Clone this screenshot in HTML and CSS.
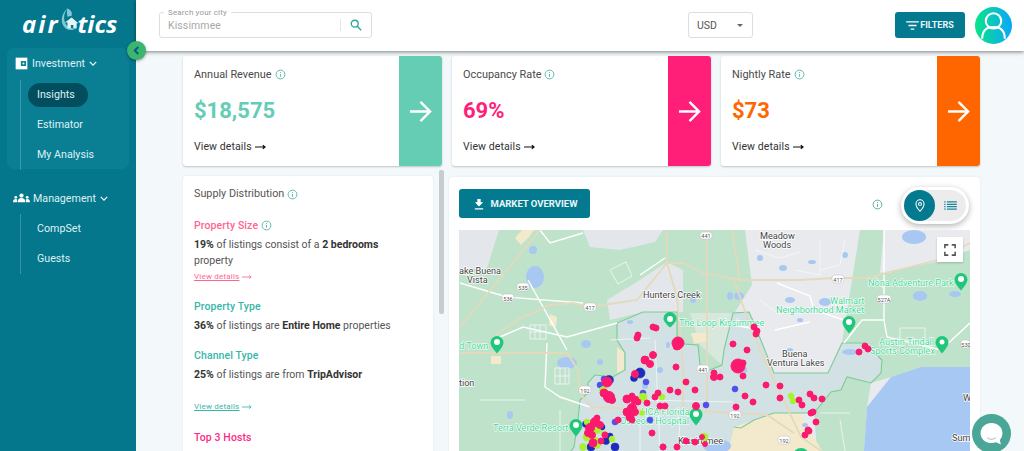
FILE: index.html
```html
<!DOCTYPE html>
<html lang="en">
<head>
<meta charset="utf-8">
<title>Airbtics Insights</title>
<link rel="stylesheet" href="styles.css">
</head>
<body>
<div class="app">
  <aside class="sidebar">
    <div class="logo">
      <span class="logo-text air">air</span>
      <svg class="logo-mark" viewBox="0 0 24 28"><path class="mark-swoosh" d="M9 0c-4 5-5 12-3 17 2 5 8 8 14 7-6 4-13 2-16-3C0 14 3 5 9 0z"/><path class="mark-swoosh" d="M9 0c4 2 6 5 5 9l-5 1c-1-3-1-7 0-10z"/><path class="mark-house" d="M14 11l8 7h-2v6h-4v-4h-3v4H9v-7H6z"/></svg>
      <span class="logo-text">tics</span>
    </div>
    <nav class="nav-group nav-panel">
      <div class="nav-head">
        <svg class="nav-icon" viewBox="0 0 20 20"><path d="M1 1h18v18H1z"/><rect class="wallet-hole" x="9" y="6" width="8" height="8" rx="1"/><circle cx="13" cy="10" r="1.600"/></svg>
        <span>Investment</span>
        <svg class="chev" viewBox="0 0 10 6"><path d="M1 1l4 4 4-4"/></svg>
      </div>
      <ul class="nav-list">
        <li class="nav-item active"><span>Insights</span></li>
        <li class="nav-item"><span>Estimator</span></li>
        <li class="nav-item"><span>My Analysis</span></li>
      </ul>
    </nav>
    <nav class="nav-group">
      <div class="nav-head">
        <svg class="nav-icon wide" viewBox="0 0 24 14"><circle cx="12" cy="3.500" r="3"/><path d="M6.500 13c0-4 2-6 5.500-6s5.500 2 5.500 6z"/><circle cx="4" cy="6" r="2"/><path d="M0 13c0-3 1.500-4.500 4-4.500S6 10 5.500 13z"/><circle cx="20" cy="6" r="2"/><path d="M24 13c0-3-1.500-4.500-4-4.500S18 10 18.500 13z"/></svg>
        <span>Management</span>
        <svg class="chev" viewBox="0 0 10 6"><path d="M1 1l4 4 4-4"/></svg>
      </div>
      <ul class="nav-list">
        <li class="nav-item"><span>CompSet</span></li>
        <li class="nav-item"><span>Guests</span></li>
      </ul>
    </nav>
    <button class="collapse" aria-label="Collapse"><svg viewBox="0 0 8 10"><path d="M6 1L2 5l4 4"/></svg></button>
  </aside>

  <div class="content">
    <header class="topbar">
      <div class="search">
        <span class="legend">Search your city</span>
        <span class="search-value">Kissimmee</span>
        <span class="search-btn"><svg viewBox="0 0 14 14"><circle cx="5.500" cy="5.500" r="4"/><path d="M8.500 8.500l4.500 4.500"/></svg></span>
      </div>
      <div class="currency"><span>USD</span><i class="caret"></i></div>
      <button class="filters"><svg viewBox="0 0 14 10"><path d="M0 1h14M2.500 5h9M5 9h4"/></svg>FILTERS</button>
      <div class="avatar"><svg viewBox="0 0 36 36"><circle cx="18" cy="13.500" r="7.500"/><path d="M7 31c0-8 4-11.500 11-11.500S29 23 29 31"/></svg></div>
    </header>

    <main class="main">
      <section class="kpis">
        <article class="kpi">
          <div class="kpi-body">
            <div class="kpi-title">Annual Revenue <svg class="info" viewBox="0 0 12 12"><circle cx="6" cy="6" r="4.800"/><path d="M6 5.500v3M6 3.300v1"/></svg></div>
            <div class="kpi-value c-mint">$18,575</div>
            <div class="kpi-link">View details <svg class="long-arrow" viewBox="0 0 12 6"><path d="M0 3h10M8.500 1l2.500 2-2.500 2"/></svg></div>
          </div>
          <div class="kpi-tile bg-mint"><svg viewBox="0 0 24 24"><path d="M1 12h21M12 2l10 10-10 10"/></svg></div>
        </article>
        <article class="kpi">
          <div class="kpi-body">
            <div class="kpi-title">Occupancy Rate <svg class="info" viewBox="0 0 12 12"><circle cx="6" cy="6" r="4.800"/><path d="M6 5.500v3M6 3.300v1"/></svg></div>
            <div class="kpi-value c-pink">69%</div>
            <div class="kpi-link">View details <svg class="long-arrow" viewBox="0 0 12 6"><path d="M0 3h10M8.500 1l2.500 2-2.500 2"/></svg></div>
          </div>
          <div class="kpi-tile bg-pink"><svg viewBox="0 0 24 24"><path d="M1 12h21M12 2l10 10-10 10"/></svg></div>
        </article>
        <article class="kpi">
          <div class="kpi-body">
            <div class="kpi-title">Nightly Rate <svg class="info" viewBox="0 0 12 12"><circle cx="6" cy="6" r="4.800"/><path d="M6 5.500v3M6 3.300v1"/></svg></div>
            <div class="kpi-value c-orange">$73</div>
            <div class="kpi-link">View details <svg class="long-arrow" viewBox="0 0 12 6"><path d="M0 3h10M8.500 1l2.500 2-2.500 2"/></svg></div>
          </div>
          <div class="kpi-tile bg-orange"><svg viewBox="0 0 24 24"><path d="M1 12h21M12 2l10 10-10 10"/></svg></div>
        </article>
      </section>

      <section class="lower">
        <div class="supply-wrap">
          <div class="supply">
            <div class="supply-title">Supply Distribution <svg class="info" viewBox="0 0 12 12"><circle cx="6" cy="6" r="4.800"/><path d="M6 5.500v3M6 3.300v1"/></svg></div>
            <h4 class="s-head c-rose first">Property Size <svg class="info" viewBox="0 0 12 12"><circle cx="6" cy="6" r="4.800"/><path d="M6 5.500v3M6 3.300v1"/></svg></h4>
            <p class="s-text"><b>19%</b> of listings consist of a <b>2 bedrooms</b> property</p>
            <div class="s-link-row near"><a class="s-link c-rose">View details</a><svg class="s-arrow c-rose" viewBox="0 0 12 6"><path d="M0 3h10M8.500 1l2.500 2-2.500 2"/></svg></div>
            <h4 class="s-head c-teal gap-a">Property Type</h4>
            <p class="s-text"><b>36%</b> of listings are <b>Entire Home</b> properties</p>
            <h4 class="s-head c-teal gap-b">Channel Type</h4>
            <p class="s-text"><b>25%</b> of listings are from <b>TripAdvisor</b></p>
            <div class="s-link-row far"><a class="s-link c-teal">View details</a><svg class="s-arrow c-teal" viewBox="0 0 12 6"><path d="M0 3h10M8.500 1l2.500 2-2.500 2"/></svg></div>
            <h4 class="s-head c-pink gap-c">Top 3 Hosts</h4>
          </div>
          <div class="scrollbar"></div>
        </div>

        <div class="market">
          <div class="market-bar">
            <button class="overview"><svg viewBox="0 0 12 14"><path d="M4 1h4v4h3L6 10 1 5h3zM1 12h10v1.500H1z"/></svg>MARKET OVERVIEW</button>
            <svg class="info info-market" viewBox="0 0 12 12"><circle cx="6" cy="6" r="4.800"/><path d="M6 5.500v3M6 3.300v1"/></svg>
            <div class="view-toggle">
              <span class="vt-on"><svg viewBox="0 0 12 16"><path d="M6 1a5 5 0 0 0-5 5c0 3.500 5 9 5 9s5-5.500 5-9a5 5 0 0 0-5-5z"/><circle cx="6" cy="6" r="1.800"/></svg></span>
              <span class="vt-off"><svg viewBox="0 0 14 10"><path d="M3 1h11M3 3.700h11M3 6.300h11M3 9h11M0 1h1.500M0 3.700h1.500M0 6.300h1.500M0 9h1.500"/></svg></span>
            </div>
          </div>
          <div class="map">
            <svg class="map-art" viewBox="459 230 511 221" preserveAspectRatio="xMinYMin slice">
              <rect class="m-base" x="459" y="230" width="511" height="221"/>
              <path class="m-green" d="M459 230H745L752 285L735 312L733 451H459Z"/>
              <path class="m-green" d="M860 230L884 230L880 273L935 262L970 250V367H921L891 377L871 383L867 407L864 451H817L814 413L831 392L841 390L847 377L881 373L882 360L864 343L842 343Z"/>
              <path class="m-grey" d="M583 230H663L655 242L620 250L590 247ZM459 230H499L487 268L459 270ZM607 300L640 280L667 262L683 270V312H643L610 320Z"/>
              <path class="m-pale" d="M749 312H734L733 380L754 323ZM700 345L722 365L733 313H690Z"/>
              <path class="m-zone" d="M677 312L643 312L617 323L617 340L625 353L625 370L613 377L595 375L588 383L588 393L580 400L578 420L574 447L571 451H728L734 427L741 428L754 420L774 413L814 413L831 392L841 390L847 377L871 383L881 373L882 360L864 343L842 343L828 373L774 373L754 323L749 312L733 313L724 350L722 365L710 370L700 365L698 345L684 344L677 337Z"/>
              <path class="m-cream" d="M734 427L754 420L774 413L800 413L822 451H728Z"/>
              <path class="m-cream" d="M491 356h10v8h-10zM550 314l7 3-1 10-7-2zM515 238l7-8h12l-5 7-8 8zM617 347l7 5v18l-7 3zM691 333h15l3 8-15 3z"/>
              <path class="m-zone-line" d="M677 337V312L643 312L617 323L617 340L625 353L625 370L613 377L595 375L588 383L588 393L580 400L578 420L574 447L571 451M677 337L684 344L698 345L700 365L710 370L722 365L724 350L733 313L749 312L754 323L774 373L828 373L842 343L864 343L882 360L881 373L871 383L847 377L841 390L831 392L814 413L774 413L754 420L741 428L734 427"/>
              <g class="m-water"><ellipse cx="535" cy="277" rx="9" ry="11"/><ellipse cx="567" cy="363" rx="10" ry="6"/><ellipse cx="533" cy="250" rx="4" ry="4"/><ellipse cx="586" cy="344" rx="5" ry="4"/><ellipse cx="914" cy="237" rx="12" ry="7"/><ellipse cx="645" cy="386" rx="3" ry="3"/><ellipse cx="717" cy="446" rx="14" ry="7"/><ellipse cx="739" cy="296" rx="5" ry="4"/><ellipse cx="790" cy="300" rx="5" ry="3"/><ellipse cx="825" cy="302" rx="6" ry="4"/><ellipse cx="800" cy="320" rx="3" ry="2"/><ellipse cx="783" cy="268" rx="4" ry="3"/><ellipse cx="760" cy="258" rx="3" ry="3"/><ellipse cx="812" cy="262" rx="4" ry="2"/><ellipse cx="845" cy="255" rx="3" ry="3"/><ellipse cx="920" cy="296" rx="7" ry="5"/><ellipse cx="955" cy="294" rx="6" ry="3"/><ellipse cx="510" cy="415" rx="3" ry="4"/><ellipse cx="600" cy="362" rx="3" ry="3"/><ellipse cx="660" cy="370" rx="3" ry="3"/><ellipse cx="668" cy="345" rx="2" ry="3"/><ellipse cx="630" cy="322" rx="3" ry="2"/><ellipse cx="693" cy="300" rx="3" ry="3"/><ellipse cx="730" cy="296" rx="3" ry="4"/><ellipse cx="850" cy="352" rx="8" ry="3"/><ellipse cx="805" cy="425" rx="3" ry="2"/><ellipse cx="790" cy="350" rx="3" ry="2"/><ellipse cx="745" cy="370" rx="2" ry="3"/></g>
              <path class="m-lake" d="M864 451l3-44 24-30 30-10h49v84z"/>
              <path class="m-road" d="M528 280L567 350M460 283L507 297L583 303M493 340L523 327L567 337L617 323M547 343L545 387L560 397L590 407M540 230L550 243L583 233M884 230L884 320L887 337L941 350L970 323M884 320L862 320L844 343M777 283L810 296L814 310L850 322M775 330L810 322M734 325L760 330M640 275L665 258"/>
              <path class="m-road thin" d="M640 400L733 402M655 340L660 450M610 340L650 338M680 420L678 451M640 425L640 451M560 410L560 451M480 400H525M875 275L884 290M820 240V275M760 300L780 315M840 420L845 451M820 413H850M530 325h16v14h-16zM535 325v14M540 325v14M530 332h16M555 368h14v16h-14zM560 368v16M565 368v16M555 376h14M610 270l16-8 6 14-14 8zM755 250l25 8 20-6M795 270l25 5M845 240l-5 25-20 5M900 340h25v-12h-25z"/>
              <path class="m-hwy" d="M460 327L540 230M493 337L517 320L550 305L573 303L590 307L637 300L667 263H683L703 273L740 280H800L834 278L867 278L937 260L970 243M667 230V263L677 297L683 367V413M707 230V413M732 230L740 280M734 280L754 337L774 380L801 437L821 451M590 407L740 413L767 415L794 433M460 353H567L578 370L580 393L593 410"/>
              <g class="m-shield"><rect x="517" y="283" width="12" height="8" rx="3"/><rect x="502" y="294" width="12" height="8" rx="3"/><rect x="584" y="303" width="12" height="8" rx="3"/><rect x="579" y="386" width="12" height="8" rx="3"/><rect x="697" y="365" width="12" height="8" rx="3"/><rect x="832" y="275" width="12" height="8" rx="3"/><rect x="877" y="295" width="14" height="8" rx="3"/><rect x="961" y="340" width="9" height="8" rx="3"/><rect x="778" y="436" width="12" height="8" rx="3"/><rect x="700" y="232" width="12" height="7" rx="3"/><rect x="729" y="411" width="12" height="8" rx="3"/></g>
              <g class="m-shield-text"><text x="523" y="289.500">535</text><text x="508" y="300.500">536</text><text x="590" y="309.500">417</text><text x="585" y="392.500">192</text><text x="703" y="371.500">441</text><text x="838" y="281.500">417</text><text x="884" y="301.500">527A</text><text x="966" y="346.500">530</text><text x="784" y="442.500">192</text><text x="706" y="238">441</text><text x="735" y="417.500">192</text></g>
              <g class="m-label"><text x="760" y="239">Meadow</text><text x="763" y="248">Woods</text><text x="459" y="274">ake Buena</text><text x="467" y="283">Vista</text><text x="643" y="297.500">Hunters Creek</text><text x="782" y="357">Buena</text><text x="767" y="366">Ventura Lakes</text><text x="459" y="386">tion</text><text x="678" y="444">Kissimmee</text><text x="963" y="401">W</text><text x="952" y="441">Sum</text></g>
              <g class="m-label-green"><text x="679" y="326">The Loop Kissimmee</text><text x="459" y="349">d Town</text><text x="493" y="431">Terra Verde Resort</text><text x="641" y="415">HCA Florida</text><text x="620" y="424">Osceola Hospital</text><text x="868" y="286">Nona Adventure Park</text><text x="830" y="304">Walmart</text><text x="776" y="313">Neighborhood Market</text><text x="879" y="345">Austin Tindall</text><text x="870" y="354">Sports Complex</text></g>
              <g class="m-pin"><path d="M670 312a6.500 6.500 0 0 1 6.500 6.500c0 4-6.500 9-6.500 9s-6.500-5-6.500-9a6.500 6.500 0 0 1 6.500-6.500z"/><path d="M497 336a6.500 6.500 0 0 1 6.500 6.500c0 4-6.500 11-6.500 11s-6.500-7-6.500-11a6.500 6.500 0 0 1 6.500-6.500z"/><path d="M961 273a6.500 6.500 0 0 1 6.500 6.500c0 4-6.500 11-6.500 11s-6.500-7-6.500-11a6.500 6.500 0 0 1 6.500-6.500z"/><path d="M849 316a6.500 6.500 0 0 1 6.500 6.500c0 4-6.500 11-6.500 11s-6.500-7-6.500-11a6.500 6.500 0 0 1 6.500-6.500z"/><path d="M942 336a6.500 6.500 0 0 1 6.500 6.500c0 4-6.500 11-6.500 11s-6.500-7-6.500-11a6.500 6.500 0 0 1 6.500-6.500z"/><path d="M696 408a6.500 6.500 0 0 1 6.500 6.500c0 4-6.500 11-6.500 11s-6.500-7-6.500-11a6.500 6.500 0 0 1 6.500-6.500z"/><path d="M576 419a6.500 6.500 0 0 1 6.500 6.500c0 4-6.500 11-6.500 11s-6.500-7-6.500-11a6.500 6.500 0 0 1 6.500-6.500z"/><circle cx="801" cy="456" r="8"/></g>
              <g class="m-pin-hole"><circle cx="670" cy="319" r="3"/><circle cx="497" cy="342" r="3"/><circle cx="961" cy="279" r="3"/><circle cx="849" cy="322" r="3"/><circle cx="942" cy="342" r="2.500"/><circle cx="696" cy="414" r="3"/><circle cx="576" cy="425" r="3"/></g>
              <g class="d-blue"><circle cx="646" cy="382" r="3"/><circle cx="600" cy="385" r="3"/><circle cx="706" cy="405" r="3"/><circle cx="735" cy="389" r="3"/><circle cx="650" cy="420" r="3"/><circle cx="615" cy="422" r="3"/><circle cx="643" cy="393" r="3"/><circle cx="663" cy="447" r="3"/><circle cx="604" cy="379" r="3"/><circle cx="629" cy="417" r="2.500"/></g>
              <g class="d-navy"><circle cx="640" cy="373" r="5"/><circle cx="634" cy="378" r="3.500"/><circle cx="609" cy="380" r="4.500"/><circle cx="586" cy="424" r="3.500"/><circle cx="591" cy="447" r="4"/><circle cx="615" cy="447" r="4"/><circle cx="606" cy="441" r="3.500"/><circle cx="602" cy="427" r="3"/><circle cx="610" cy="436" r="3"/></g>
              <g class="d-lime"><circle cx="643" cy="397" r="4"/><circle cx="603" cy="390" r="3.500"/><circle cx="662" cy="397" r="3"/><circle cx="587" cy="437" r="4"/><circle cx="597" cy="430" r="3.500"/><circle cx="791" cy="396" r="3"/><circle cx="793" cy="401" r="3"/><circle cx="704" cy="437" r="4"/><circle cx="612" cy="439" r="3"/><circle cx="587" cy="422" r="3"/><circle cx="583" cy="447" r="3.500"/><circle cx="597" cy="445" r="3.500"/><circle cx="595" cy="440" r="3"/><circle cx="642" cy="413" r="2.500"/><circle cx="604" cy="434" r="3"/></g>
              <g class="d-pink"><circle cx="653" cy="327" r="3"/><circle cx="656" cy="328" r="3"/><circle cx="638" cy="335" r="3"/><circle cx="637" cy="338" r="3"/><circle cx="678" cy="343" r="6"/><circle cx="677" cy="346" r="4"/><circle cx="733" cy="344" r="3"/><circle cx="653" cy="355" r="3.500"/><circle cx="645" cy="360" r="4"/><circle cx="650" cy="364" r="3.500"/><circle cx="676" cy="367" r="3"/><circle cx="635" cy="374" r="3.500"/><circle cx="686" cy="382" r="3"/><circle cx="670" cy="390" r="3"/><circle cx="678" cy="392" r="3"/><circle cx="695" cy="390" r="3"/><circle cx="658" cy="393" r="3"/><circle cx="655" cy="397" r="3"/><circle cx="714" cy="377" r="3.500"/><circle cx="720" cy="377" r="3"/><circle cx="714" cy="373" r="3"/><circle cx="607" cy="382" r="5"/><circle cx="609" cy="397" r="5.500"/><circle cx="604" cy="393" r="4"/><circle cx="612" cy="400" r="3.500"/><circle cx="627" cy="399" r="4"/><circle cx="635" cy="400" r="4"/><circle cx="638" cy="402" r="3"/><circle cx="632" cy="396" r="3"/><circle cx="647" cy="403" r="3"/><circle cx="660" cy="406" r="3"/><circle cx="665" cy="406" r="3"/><circle cx="696" cy="406" r="3.500"/><circle cx="632" cy="408" r="4.500"/><circle cx="627" cy="412" r="4"/><circle cx="630" cy="417" r="4"/><circle cx="635" cy="412" r="3.500"/><circle cx="632" cy="420" r="3"/><circle cx="618" cy="420" r="3"/><circle cx="652" cy="433" r="3"/><circle cx="595" cy="422" r="4.500"/><circle cx="590" cy="428" r="4.500"/><circle cx="600" cy="425" r="3.500"/><circle cx="593" cy="443" r="4"/><circle cx="588" cy="433" r="3.500"/><circle cx="605" cy="435" r="3"/><circle cx="601" cy="441" r="3"/><circle cx="592" cy="435" r="3.500"/><circle cx="597" cy="418" r="3"/><circle cx="663" cy="447" r="3"/><circle cx="677" cy="447" r="3"/><circle cx="686" cy="441" r="3"/><circle cx="695" cy="442" r="3"/><circle cx="702" cy="437" r="2.500"/><circle cx="705" cy="444" r="2.500"/><circle cx="754" cy="327" r="3"/><circle cx="757" cy="331" r="3"/><circle cx="756" cy="334" r="3"/><circle cx="747" cy="350" r="3"/><circle cx="738" cy="366" r="7"/><circle cx="743" cy="363" r="3"/><circle cx="743" cy="376" r="3"/><circle cx="766" cy="385" r="3"/><circle cx="780" cy="386" r="3"/><circle cx="745" cy="396" r="3"/><circle cx="753" cy="402" r="3"/><circle cx="780" cy="398" r="3"/><circle cx="736" cy="407" r="3"/><circle cx="810" cy="394" r="3"/><circle cx="814" cy="398" r="3"/><circle cx="822" cy="399" r="3"/><circle cx="799" cy="400" r="3"/><circle cx="802" cy="405" r="3"/><circle cx="813" cy="412" r="3"/><circle cx="811" cy="413" r="3"/><circle cx="816" cy="422" r="3"/><circle cx="808" cy="430" r="3"/><circle cx="809" cy="431" r="3"/><circle cx="805" cy="435" r="3"/><circle cx="865" cy="346" r="3"/><circle cx="868" cy="349" r="3"/><circle cx="859" cy="352" r="3"/></g>
            </svg>
            <button class="fs" aria-label="Fullscreen"><svg viewBox="0 0 14 14"><path d="M1 5V1h4M9 1h4v4M13 9v4H9M5 13H1V9"/></svg></button>
          </div>
        </div>
      </section>
    </main>
  </div>
  <button class="chat" aria-label="Chat"><svg viewBox="0 0 24 24"><path d="M12 2c6 0 10.500 4.200 10.500 9.500 0 2.800-1 5-2.500 6.700l1 4.300-4.500-2c-1.300.5-2.800.7-4.500.7-6 0-10.500-4.200-10.500-9.500S6 2 12 2z"/><path class="chat-smile" d="M8 16c2.500 2 5.500 2 8 0"/></svg></button>
</div>
</body>
</html>
```
FILE: styles.css
```css
* { box-sizing: border-box; }
html, body { margin: 0; height: 100%; overflow: hidden; }
body { font-family: "Roboto", "Liberation Sans", sans-serif; color: #444; background: #f3f9fb; }
button { font-family: inherit; border: 0; padding: 0; }
ul { list-style: none; margin: 0; padding: 0; }
svg { display: block; }

.app { display: flex; height: 451px; width: 1024px; position: relative; overflow: hidden; }

/* sidebar */
.sidebar { width: 136px; flex: none; background: #04778d; position: relative; color: #dff1f4; padding: 0 7px; }
.logo { height: 48px; display: flex; align-items: flex-start; padding: 7px 0 0 15px; }
.logo-text { font-family: "Open Sans", sans-serif; font-style: italic; font-weight: 700; font-size: 24px; line-height: 33px; color: #fff; }
.logo-text.air { letter-spacing: 2px; }
.logo-mark { width: 20px; height: 26px; margin-right: -2px; flex: none; }
.mark-swoosh { fill: #7fc9d6; }
.mark-house { fill: #e4f5f7; }
.nav-panel { background: #0a7f94; border-radius: 7px; height: 121px; }
.nav-group + .nav-group { margin-top: 14px; }
.nav-head { display: flex; align-items: center; height: 30px; font-size: 10.700px; padding-left: 8px; }
.nav-icon { width: 13px; height: 13px; fill: #fff; margin-right: 4px; flex: none; }
.nav-icon.wide { width: 17px; height: 10px; margin-left: -2px; margin-right: 3px; }
.wallet-hole { fill: #0a7f94; }
.nav-group circle { fill: #fff; }
.chev { width: 8px; height: 5px; margin-left: 4px; fill: none; stroke: #fff; stroke-width: 1.500; }
.nav-list { border-left: 1px solid rgba(255,255,255,.22); margin-left: 13px; margin-top: 1px; padding-left: 7px; }
.nav-panel .nav-list { margin-top: 2px; }
.nav-item { height: 30px; display: flex; align-items: center; font-size: 10.700px; }
.nav-item span { padding: 0 9px; height: 24px; line-height: 24px; border-radius: 12px; }
.nav-item.active span { background: #034e5e; width: 60px; }
.collapse { position: absolute; top: 41px; left: 127px; width: 19px; height: 19px; border-radius: 50%; background: #3cb56e; box-shadow: 0 1px 3px rgba(0,0,0,.4); display: flex; align-items: center; justify-content: center; z-index: 5; }
.collapse svg { width: 7px; height: 9px; fill: none; stroke: #075a8a; stroke-width: 2.200; }

/* content */
.content { flex: 1; min-width: 0; display: flex; flex-direction: column; }
.topbar { height: 51px; background: #fff; box-shadow: 0 1px 4px rgba(0,0,0,.5); display: flex; align-items: flex-start; padding-top: 12px; position: relative; z-index: 3; flex: none; }
.search { position: relative; width: 213px; height: 26px; margin-left: 23px; border: 1px solid #dcdfe0; border-radius: 3px; display: flex; align-items: center; padding-left: 8px; }
.legend { position: absolute; top: -5px; left: 4px; background: #fff; padding: 0 4px; font-size: 8px; line-height: 9px; color: #9a9a9a; letter-spacing: .15px; }
.search-value { font-size: 10.500px; color: #a9a9a9; letter-spacing: .1px; }
.search-btn { position: absolute; right: 9px; top: 6px; width: 22px; height: 12px; border-left: 1px solid #e4e4e4; padding-left: 9px; }
.search-btn svg { width: 12px; height: 12px; fill: none; stroke: #2ba79a; stroke-width: 1.600; }
.currency { width: 65px; height: 26px; margin-left: 316px; border: 1px solid #dcdfe0; border-radius: 3px; display: flex; align-items: center; justify-content: space-between; padding: 0 9px 0 8px; font-size: 10.500px; color: #555; }
.caret { width: 0; height: 0; border: 3px solid transparent; border-top: 3.500px solid #666; border-bottom: 0; }
.filters { width: 70px; height: 26px; margin-left: 142px; background: #037a8f; border-radius: 3px; color: #e9f6f8; font-size: 9px; font-weight: 700; display: flex; align-items: center; justify-content: center; gap: 1px; }
.filters svg { width: 13px; height: 9px; fill: none; stroke: #fff; stroke-width: 1.400; }
.avatar { width: 37px; height: 37px; margin-left: 10px; margin-top: -5px; border-radius: 50%; background: linear-gradient(90deg, #0be48a, #09a6f7); }
.avatar svg { width: 37px; height: 37px; fill: none; stroke: #fff; stroke-width: 2; }

.main { flex: 1; min-height: 0; padding: 5px 44px 0 47px; overflow: hidden; }
.kpis { display: grid; grid-template-columns: repeat(3, 1fr); gap: 10px; }
.kpi { height: 110px; background: #fff; border-radius: 3px; box-shadow: 0 1px 2px rgba(0,0,0,.22); display: flex; overflow: hidden; }
.kpi-body { flex: 1; padding: 12px 11px 0; }
.kpi-title { font-size: 10.900px; line-height: 13px; color: #4a4a4a; display: flex; align-items: center; gap: 3px; }
.info { width: 11px; height: 11px; fill: none; stroke: #55b3a6; stroke-width: 1; flex: none; }
.kpi-value { font-size: 22px; font-weight: 700; line-height: 26px; margin-top: 17px; }
.kpi-link { font-size: 10.500px; line-height: 13px; margin-top: 16px; color: #333; display: flex; align-items: center; gap: 3px; letter-spacing: .1px; }
.long-arrow { width: 11px; height: 6px; fill: none; stroke: #111; stroke-width: 1.300; }
.kpi-tile { width: 43px; flex: none; display: flex; align-items: center; justify-content: center; }
.kpi-tile svg { width: 23px; height: 23px; fill: none; stroke: #fff; stroke-width: 2.500; }
.c-mint { color: #66cdb5; } .bg-mint { background: #66cdb5; }
.c-pink { color: #ff1f78; } .bg-pink { background: #ff1f78; }
.c-orange { color: #ff6600; } .bg-orange { background: #ff6600; }
.c-rose { color: #ff6492; stroke: #ff6492; }
.c-teal { color: #36b7a9; stroke: #36b7a9; }

.lower { display: flex; margin-top: 10px; align-items: flex-start; gap: 5px; }
.supply-wrap { width: 261px; display: flex; gap: 6px; flex: none; }
.supply { width: 250px; height: 290px; background: #fff; border-radius: 3px; box-shadow: 0 0 2px rgba(0,0,0,.1); padding: 11px 11px 0; }
.scrollbar { width: 5px; height: 144px; margin-top: -6px; background: #c9cccd; border-radius: 2px; }
.supply-title { font-size: 10.800px; line-height: 14px; color: #555; display: flex; align-items: center; gap: 3px; }
.s-head { font-size: 10.500px; line-height: 13px; font-weight: 500; margin: 0; display: flex; align-items: center; gap: 3px; letter-spacing: .1px; }
.s-head.first { margin-top: 18px; }
.gap-a { margin-top: 19px; }
.gap-b { margin-top: 15px; }
.gap-c { margin-top: 20px; }
.c-pink.s-head { color: #ff2a85; }
.s-text { font-size: 10.500px; line-height: 16px; color: #555; margin: 5px 0 0; max-width: 210px; }
.s-text b { color: #333; font-weight: 700; }
.s-link { font-size: 8px; line-height: 10px; text-decoration: underline; display: inline-block; letter-spacing: .2px; vertical-align: middle; }
.s-arrow { width: 10px; height: 6px; fill: none; stroke-width: 1; display: inline-block; margin-left: 3px; vertical-align: middle; }
.s-link-row { line-height: 10px; height: 10px; }
.s-link-row.near { margin-top: 2px; }
.s-link-row.far { margin-top: 18px; }

.market { width: 531px; height: 290px; background: #fff; border-radius: 3px; box-shadow: 0 0 2px rgba(0,0,0,.1); padding: 12px 10px 0; margin-top: 1px; }
.market-bar { height: 41px; display: flex; align-items: flex-start; position: relative; }
.overview { width: 131px; height: 29px; background: #037a8f; border-radius: 3px; color: #e9f6f8; font-size: 9.500px; font-weight: 700; display: flex; align-items: center; justify-content: center; gap: 7px; padding-left: 2px; }
.overview svg { width: 10px; height: 12px; fill: #fff; }
.info-market { margin-left: 282px; margin-top: 10px; stroke: #4aa9a0; }
.view-toggle { position: absolute; left: 442px; top: -2px; width: 68px; height: 37px; background: #ececec; border-radius: 19px; border: 3px solid #fff; box-shadow: 0 2px 6px rgba(0,0,0,.3); display: flex; align-items: center; }
.vt-on { width: 31px; height: 31px; border-radius: 50%; background: #037a8f; display: flex; align-items: center; justify-content: center; }
.vt-on svg { width: 10px; height: 13px; fill: none; stroke: #fff; stroke-width: 1.300; }
.vt-off { flex: 1; display: flex; justify-content: center; }
.vt-off svg { width: 13px; height: 9px; fill: none; stroke: #18869a; stroke-width: 1.500; }
.map { position: relative; width: 511px; height: 221px; overflow: hidden; }
.map-art { width: 511px; height: 221px; }
.fs { position: absolute; top: 7px; right: 7px; width: 26px; height: 25px; background: #fff; box-shadow: 0 1px 2px rgba(0,0,0,.2); display: flex; align-items: center; justify-content: center; }
.fs svg { width: 12px; height: 12px; fill: none; stroke: #555; stroke-width: 1.800; }

/* map paint */
.m-base { fill: #e8eaee; }
.m-green { fill: #bfe2ca; }
.m-grey { fill: #e3e7ec; }
.m-pale { fill: #d8e8dc; }
.m-zone { fill: #d2e1e4; }
.m-cream { fill: #f3e9cc; }
.m-zone-line { fill: none; stroke: #7ccb95; stroke-width: 1.100; }
.m-water { fill: #a8c8f2; }
.m-lake { fill: #a6c8f2; }
.m-road { fill: none; stroke: #fff; stroke-width: 1.400; }
.m-road.thin { stroke-width: .8; stroke: #f6f7f8; }
.m-hwy { fill: none; stroke: #e4dabb; stroke-width: 1.800; }
.m-shield rect { fill: #fff; stroke: #bbb; stroke-width: .5; }
.m-shield-text text { font-family: "Roboto", sans-serif; font-size: 5.500px; fill: #555; text-anchor: middle; }
.m-label text { font-family: "Roboto", sans-serif; font-size: 9.100px; fill: #444; paint-order: stroke; stroke: #fff; stroke-width: 1.500px; }
.m-label-green text { font-family: "Roboto", sans-serif; font-size: 9.100px; fill: #3fd998; paint-order: stroke; stroke: #fff; stroke-width: 1.200px; }
.m-pin { fill: #1ec77a; }
.m-pin-hole { fill: #fff; }
.d-pink { fill: #fb1a6d; stroke: #fb1a6d; stroke-width: 1; }
.d-blue { fill: #4d50ea; stroke: #4d50ea; stroke-width: .6; }
.d-navy { fill: #1c2dbb; stroke: #1c2dbb; stroke-width: .6; }
.d-lime { fill: #a6f32b; stroke: #a6f32b; stroke-width: .6; }

.chat { position: absolute; left: 972px; top: 414px; width: 39px; height: 39px; border-radius: 50%; background: #4aa696; display: flex; align-items: center; justify-content: center; }
.chat svg { width: 25px; height: 25px; fill: #fff; }
.chat-smile { fill: none; stroke: #b9c9c6; stroke-width: 1.200; }
```
